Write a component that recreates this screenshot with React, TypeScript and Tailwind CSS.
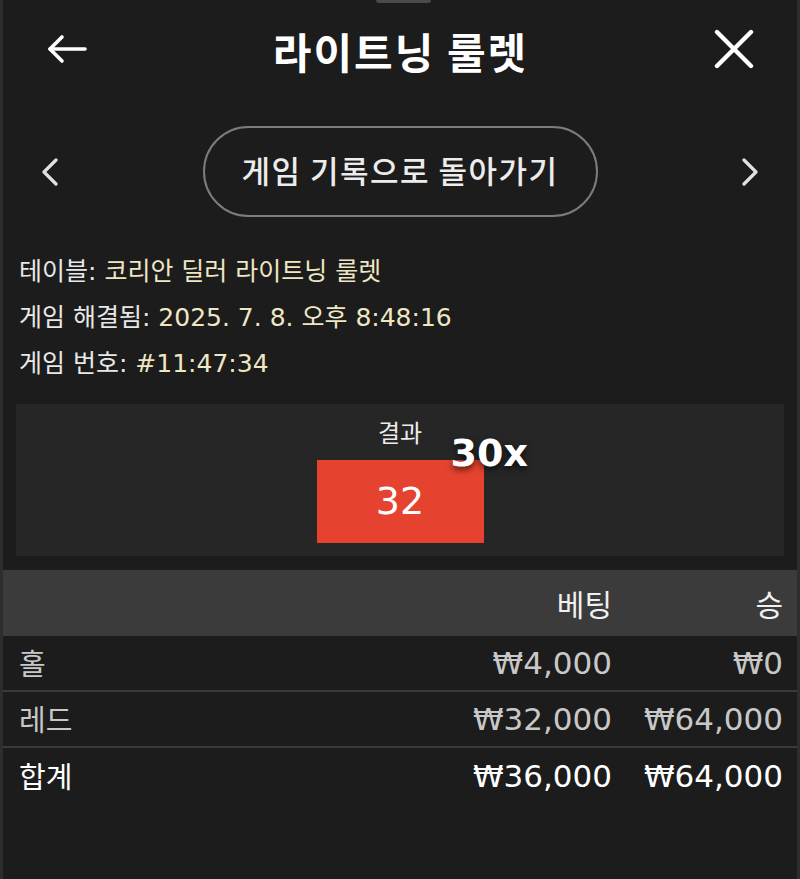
const CJK = { fontFamily: '"Noto Sans CJK KR", "Noto Sans", sans-serif' };
const MIX = { fontFamily: '"DejaVu Sans", "Noto Sans CJK KR", sans-serif' };

type Row = { label: string; bet: string; win: string; total?: boolean };

const rows: Row[] = [
  { label: "홀", bet: "₩4,000", win: "₩0" },
  { label: "레드", bet: "₩32,000", win: "₩64,000" },
  { label: "합계", bet: "₩36,000", win: "₩64,000", total: true },
];

function Fleche() {
  return (
    <svg width="40" height="30" viewBox="0 0 40 30" fill="none" stroke="currentColor" strokeWidth="3.6" strokeLinecap="round" strokeLinejoin="round">
      <path d="M3 15H38" />
      <path d="M15 3 3 15 15 27" />
    </svg>
  );
}

function Croix() {
  return (
    <svg width="40" height="40" viewBox="0 0 40 40" fill="none" stroke="currentColor" strokeWidth="4.4" strokeLinecap="round">
      <path d="M3 3 37 37M37 3 3 37" />
    </svg>
  );
}

function Chevron({ droite }: { droite?: boolean }) {
  return (
    <svg width="18" height="28" viewBox="0 0 18 28" fill="none" stroke="currentColor" strokeWidth="3.2" strokeLinecap="round" strokeLinejoin="round">
      <path d={droite ? "M3 2 15 14 3 26" : "M15 2 3 14 15 26"} />
    </svg>
  );
}

export default function App() {
  return (
    <div
      style={CJK}
      className="relative min-h-[879px] w-[800px] border-x-[3px] border-[#2d2d2d] bg-[#1c1c1c] text-white"
    >
      {/* poignée du panneau */}
      <div className="absolute left-[373px] top-0 h-[3px] w-[55px] rounded-b bg-[#4a4a4a]" />

      {/* en-tête */}
      <div className="flex h-[100px] items-center justify-between pl-[44px] pr-[43px]">
        <div className="-mt-[2px]">
          <Fleche />
        </div>
        <h1 className="text-[42px] font-bold tracking-[2px]">라이트닝 룰렛</h1>
        <div className="-mt-[3px]">
          <Croix />
        </div>
      </div>

      {/* navigation */}
      <div className="mt-[26px] flex items-center justify-between px-[38px] text-[#e0e0e0]">
        <Chevron />
        <button
          type="button"
          className="flex h-[91px] w-[395px] items-center justify-center rounded-full border-2 border-[#7c7c7c] pb-[2px] text-[31px] font-medium tracking-[1.5px] text-[#ececec]"
        >
          게임 기록으로 돌아가기
        </button>
        <Chevron droite />
      </div>

      {/* informations */}
      <div style={MIX} className="mt-[32px] px-[16px] text-[25px] leading-[46px] text-[#e8e8e8]">
        <div>
          테이블: <span className="text-[#efe7c4]">코리안 딜러 라이트닝 룰렛</span>
        </div>
        <div>
          게임 해결됨: <span className="text-[#efe7c4]">2025. 7. 8. 오후 8:48:16</span>
        </div>
        <div>
          게임 번호: <span className="text-[#efe7c4]">#11:47:34</span>
        </div>
      </div>

      {/* résultat */}
      <div className="mx-[13px] mt-[17px] flex flex-col items-center bg-[#262626] pb-[13px] pt-[14px]">
        <div className="text-[24px] leading-[28px] text-[#ececec]">결과</div>
        <div
          style={MIX}
          className="relative mt-[14px] flex h-[83px] w-[167px] items-center justify-center bg-[#e5432f] text-[38px]"
        >
          32
          <span className="absolute left-[134px] top-[-26px] text-[38px] font-bold leading-none [text-shadow:0_3px_6px_rgba(0,0,0,0.7)]">
            30x
          </span>
        </div>
      </div>

      {/* tableau */}
      <div className="mt-[14px]">
        <div className="flex h-[66px] items-center bg-[#3b3b3b] pr-[14px] text-[30px] text-[#f0f0f0]">
          <div className="flex-1" />
          <div className="text-right">베팅</div>
          <div className="w-[171px] text-right">승</div>
        </div>
        {rows.map((r, i) => (
          <div
            key={r.label}
            className={
              "flex h-[56px] items-center pl-[16px] pr-[14px] " +
              (i < rows.length - 1 ? "border-b-2 border-[#3a3a3a] " : "") +
              (r.total ? "text-white" : "text-[#c8c8c8]")
            }
          >
            <div className="flex-1 text-[29px]">{r.label}</div>
            <div style={MIX} className="text-right text-[31px]">
              {r.bet}
            </div>
            <div style={MIX} className="w-[171px] text-right text-[31px]">
              {r.win}
            </div>
          </div>
        ))}
      </div>
    </div>
  );
}
